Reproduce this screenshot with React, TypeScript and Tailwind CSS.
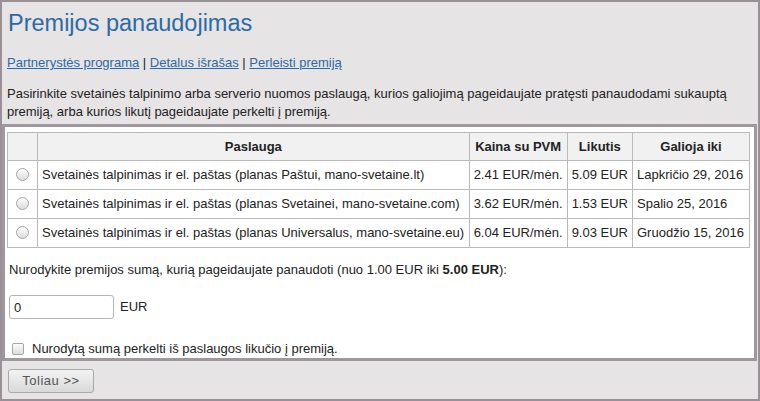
import React from "react"

const rows = [
  {
    name: "Svetainės talpinimas ir el. paštas (planas Paštui, mano-svetaine.lt)",
    price: "2.41 EUR/mėn.",
    left: "5.09 EUR",
    until: "Lapkričio 29, 2016",
  },
  {
    name: "Svetainės talpinimas ir el. paštas (planas Svetainei, mano-svetaine.com)",
    price: "3.62 EUR/mėn.",
    left: "1.53 EUR",
    until: "Spalio 25, 2016",
  },
  {
    name: "Svetainės talpinimas ir el. paštas (planas Universalus, mano-svetaine.eu)",
    price: "6.04 EUR/mėn.",
    left: "9.03 EUR",
    until: "Gruodžio 15, 2016",
  },
]

function Radio() {
  return (
    <span className="inline-block w-[13px] h-[13px] rounded-full border border-[#a6a6a6] bg-gradient-to-b from-[#fdfdfd] to-[#dcdcdc] shadow-[inset_0_1px_1px_rgba(255,255,255,0.8)]" />
  )
}

export default function App() {
  return (
    <div className="w-[760px] h-[401px] overflow-hidden bg-[#e6e4e5] border-2 border-[#9a9198] text-[13px] text-[#222] font-['Liberation_Sans',Arial,sans-serif]">
      {/* Header */}
      <h1 className="pl-[6px] pt-[7px] text-[23.5px] leading-[28px] text-[#2b6aa6]">
        Premijos panaudojimas
      </h1>
      <div className="pl-[5px] mt-[18px] leading-[16px]">
        <a href="#" className="text-[#2b6aa6] underline">Partnerystės programa</a>
        {" | "}
        <a href="#" className="text-[#2b6aa6] underline">Detalus išrašas</a>
        {" | "}
        <a href="#" className="text-[#2b6aa6] underline">Perleisti premiją</a>
      </div>
      <p className="pl-[5px] pr-[20px] mt-[14px] leading-[18px]">
        Pasirinkite svetainės talpinimo arba serverio nuomos paslaugą, kurios galiojimą pageidaujate pratęsti panaudodami sukauptą premiją, arba kurios likutį pageidaujate perkelti į premiją.
      </p>

      {/* Form box */}
      <div className="mt-[3px] mr-[1px] border-[3px] border-[#9e979c] bg-white pl-[2px] pr-[1px] pt-[5px] pb-[1px]">
        <table className="w-[743px] border-collapse border border-[#a8a8a8]">
          <thead>
            <tr className="bg-[#f1f1f1] h-[28px]">
              <th className="w-[30px] border border-[#b9b9b9]" />
              <th className="border border-[#b9b9b9] font-bold">Paslauga</th>
              <th className="w-[98px] border border-[#b9b9b9] font-bold">Kaina su PVM</th>
              <th className="w-[63px] border border-[#b9b9b9] font-bold">Likutis</th>
              <th className="w-[117px] border border-[#b9b9b9] font-bold">Galioja iki</th>
            </tr>
          </thead>
          <tbody>
            {rows.map((r) => (
              <tr key={r.name} className="h-[29px]">
                <td className="border border-[#b9b9b9] text-center align-middle leading-none">
                  <Radio />
                </td>
                <td className="border border-[#b9b9b9] px-[4px] whitespace-nowrap">{r.name}</td>
                <td className="border border-[#b9b9b9] px-[4px] whitespace-nowrap">{r.price}</td>
                <td className="border border-[#b9b9b9] px-[4px] whitespace-nowrap">{r.left}</td>
                <td className="border border-[#b9b9b9] px-[4px] whitespace-nowrap">{r.until}</td>
              </tr>
            ))}
          </tbody>
        </table>

        <p className="mt-[14px] pl-[2px] leading-[16px]">
          Nurodykite premijos sumą, kurią pageidaujate panaudoti (nuo 1.00 EUR iki <b>5.00 EUR</b>):
        </p>

        <div className="mt-[17px] pl-[2px] flex items-center gap-[6px]">
          <input
            defaultValue="0"
            className="w-[105px] h-[24px] rounded-[3px] border border-[#b4b4b4] px-[4px] text-[13px] text-[#222] outline-none"
          />
          <span>EUR</span>
        </div>

        <label className="mt-[22px] pl-[5px] flex items-center gap-[8px] leading-[16px]">
          <span className="inline-block w-[12px] h-[12px] rounded-[2px] border border-[#a6a6a6] bg-gradient-to-b from-[#fdfdfd] to-[#dcdcdc]" />
          <span>Nurodytą sumą perkelti iš paslaugos likučio į premiją.</span>
        </label>
      </div>

      <div className="pl-[6px] pt-[8px]">
        <button className="w-[86px] h-[24px] rounded-[3px] border border-[#a9a9a9] bg-gradient-to-b from-[#f3f3f3] to-[#d9d9d9] text-[#555] text-[13px] tracking-[0.5px]">
          Toliau &gt;&gt;
        </button>
      </div>
    </div>
  )
}
